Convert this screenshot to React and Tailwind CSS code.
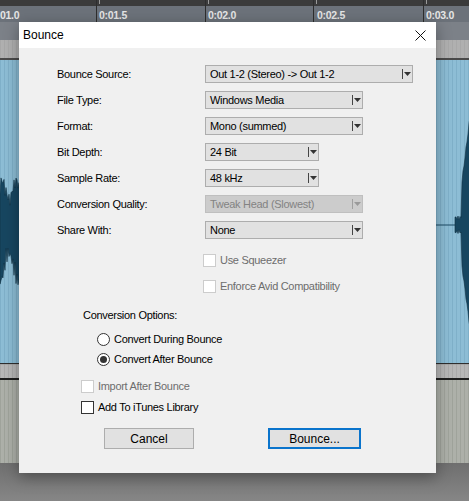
import React from "react";

const FONT = { fontFamily: '"Liberation Sans", Arial, sans-serif' };

function buildLeftWave() {
  const top = [];
  const bottom = [];
  for (let x = 0; x <= 20; x++) {
    const t = 225 - (26 + 14 * Math.abs(Math.sin(x * 1.9)) + 9 * Math.sin(x * 0.45 + 0.6));
    const b = 225 + (30 + 18 * Math.abs(Math.sin(x * 1.4 + 1)) + 14 * Math.cos(x * 0.35));
    top.push(`${x},${t.toFixed(1)}`);
    bottom.unshift(`${x},${b.toFixed(1)}`);
  }
  return [...top, ...bottom].join(" ");
}

function buildRightWave() {
  const top = [];
  const bottom = [];
  for (let x = 455; x <= 470; x++) {
    let a;
    if (x < 462) a = 4 + 5 * Math.abs(Math.sin(x * 1.3));
    else a = 40 + (x - 462) * 8 + 6 * Math.abs(Math.sin(x * 2.1));
    const t = 225 - a;
    const b = 225 + a * 0.95;
    top.push(`${x},${t.toFixed(1)}`);
    bottom.unshift(`${x},${b.toFixed(1)}`);
  }
  return [...top, ...bottom].join(" ");
}

function Backdrop() {
  const ticks = [96, 205, 313, 423];
  const labels = [
    { x: 0, t: "01.0" },
    { x: 99, t: "0:01.5" },
    { x: 208, t: "0:02.0" },
    { x: 317, t: "0:02.5" },
    { x: 426, t: "0:03.0" },
  ];
  return (
    <svg className="absolute inset-0" width="469" height="501" viewBox="0 0 469 501">
      <defs>
        <pattern id="blueStripe" width="4" height="10" patternUnits="userSpaceOnUse">
          <rect width="4" height="10" fill="#8dbdd5" />
          <rect width="1" height="10" fill="#7fb0c9" />
        </pattern>
        <pattern id="grayStripe" width="4" height="10" patternUnits="userSpaceOnUse">
          <rect width="4" height="10" fill="#adb0a9" />
          <rect width="1" height="10" fill="#9fa39b" />
        </pattern>
        <pattern id="lightStripe" width="4" height="10" patternUnits="userSpaceOnUse">
          <rect width="4" height="10" fill="#b7b7b7" />
          <rect width="1" height="10" fill="#a9a9a9" />
        </pattern>
        <linearGradient id="floor" x1="0" y1="0" x2="0" y2="1">
          <stop offset="0" stopColor="#6f6f6f" />
          <stop offset="1" stopColor="#868686" />
        </linearGradient>
      </defs>
      <rect x="0" y="0" width="469" height="6" fill="#3b3b3b" />
      <rect x="0" y="6" width="469" height="16" fill="#6c727a" />
      <rect x="0" y="22" width="469" height="18" fill="#7c8188" />
      <rect x="0" y="40" width="469" height="18" fill="#a6a6a6" />
      <rect x="0" y="40" width="469" height="18" fill="url(#lightStripe)" opacity="0.6" />
      <rect x="0" y="58" width="469" height="2" fill="#4a4a4a" />
      <rect x="0" y="60" width="469" height="303" fill="url(#blueStripe)" />
      <rect x="0" y="363" width="469" height="1.5" fill="#2f2f2f" />
      <rect x="0" y="364.5" width="469" height="14" fill="url(#lightStripe)" />
      <rect x="0" y="378" width="469" height="2" fill="#1e1e1e" />
      <rect x="0" y="380" width="469" height="83" fill="url(#grayStripe)" />
      <rect x="0" y="463" width="469" height="38" fill="url(#floor)" />
      {ticks.map((x) => (
        <g key={x}>
          <rect x={x} y="0" width="1" height="22" fill="#2e2e2e" />
          <rect x={x + 3} y="0" width="1" height="4" fill="#9a9a9a" />
        </g>
      ))}
      {labels.map((l) => (
        <text
          key={l.x}
          x={l.x}
          y="19"
          fill="#e6e6e6"
          fontSize="10.5"
          fontWeight="bold"
          fontFamily='"Liberation Sans", Arial, sans-serif'
        >
          {l.t}
        </text>
      ))}
      <line x1="0" y1="225" x2="469" y2="225" stroke="#1c4a64" strokeWidth="1" />
      <polygon points={buildLeftWave()} fill="#174660" stroke="#0f2f42" strokeWidth="0.6" />
      <polygon points={buildRightWave()} fill="#174660" stroke="#0f2f42" strokeWidth="0.6" />
    </svg>
  );
}

function Select({ value, widthClass, disabled }) {
  return (
    <div
      className={`flex h-[18px] items-center border ${widthClass} ${
        disabled ? "border-[#bfbfbf] bg-[#cccccc] text-[#838383]" : "border-[#adadad] bg-[#e1e1e1] text-black"
      }`}
    >
      <span className="flex-1 truncate pl-[4px] leading-none">{value}</span>
      <div className={`h-[10px] w-px ${disabled ? "bg-[#a0a0a0]" : "bg-[#444]"}`} />
      <div className="flex w-[9px] items-center justify-center">
        <svg width="7" height="4" viewBox="0 0 7 4">
          <polygon points="0,0 7,0 3.5,4" fill={disabled ? "#9a9a9a" : "#333"} />
        </svg>
      </div>
    </div>
  );
}

function Row({ label, children }) {
  return (
    <div className="mb-[8px] flex h-[18px] items-center">
      <div className="w-[186px] pl-[38px] text-black">{label}</div>
      {children}
    </div>
  );
}

function Check({ label, disabled }) {
  return (
    <div className={`flex h-[13px] items-center gap-[4px] leading-[13px] ${disabled ? "text-[#6d6d6d]" : "text-black"}`}>
      <div className={`h-[13px] w-[13px] border bg-white ${disabled ? "border-[#cccccc]" : "border-[#333]"}`} />
      <span>{label}</span>
    </div>
  );
}

function Radio({ label, checked }) {
  return (
    <div className="flex h-[13px] items-center gap-[4px] leading-[13px] text-black">
      <div className="flex h-[13px] w-[13px] items-center justify-center rounded-full border border-[#333] bg-white">
        {checked && <div className="h-[7px] w-[7px] rounded-full bg-[#333]" />}
      </div>
      <span>{label}</span>
    </div>
  );
}

export default function App() {
  return (
    <div className="relative h-[501px] w-[469px] overflow-hidden text-[11px] tracking-[-0.3px]" style={FONT}>
      <Backdrop />
      <div className="absolute left-[19px] top-[22px] w-[417px] shadow-[0_4px_14px_rgba(0,0,0,0.35)]">
        <div className="flex h-[26px] items-center justify-between bg-white pl-[4px] pr-[10px]">
          <span className="text-[12px] tracking-normal text-black">Bounce</span>
          <svg width="11" height="11" viewBox="0 0 11 11">
            <path d="M0.5 0.5 L10.5 10.5 M10.5 0.5 L0.5 10.5" stroke="#111" strokeWidth="1" />
          </svg>
        </div>
        <div className="flex h-[425px] flex-col bg-[#f0f0f0] pt-[17px]">
          <Row label="Bounce Source:">
            <Select value="Out 1-2 (Stereo) -> Out 1-2" widthClass="w-[208px]" />
          </Row>
          <Row label="File Type:">
            <Select value="Windows Media" widthClass="w-[158px]" />
          </Row>
          <Row label="Format:">
            <Select value="Mono (summed)" widthClass="w-[158px]" />
          </Row>
          <Row label="Bit Depth:">
            <Select value="24 Bit" widthClass="w-[114px]" />
          </Row>
          <Row label="Sample Rate:">
            <Select value="48 kHz" widthClass="w-[114px]" />
          </Row>
          <Row label="Conversion Quality:">
            <Select value="Tweak Head (Slowest)" widthClass="w-[158px]" disabled />
          </Row>
          <Row label="Share With:">
            <Select value="None" widthClass="w-[158px]" />
          </Row>

          <div className="mt-[7px] flex flex-col gap-[13px] pl-[184px]">
            <Check label="Use Squeezer" disabled />
            <Check label="Enforce Avid Compatibility" disabled />
          </div>

          <div className="mt-[16px] h-[13px] pl-[64px] leading-[13px] text-black">Conversion Options:</div>
          <div className="mt-[11px] flex flex-col gap-[7px] pl-[78px]">
            <Radio label="Convert During Bounce" />
            <Radio label="Convert After Bounce" checked />
          </div>

          <div className="mt-[14px] flex flex-col gap-[8px] pl-[62px]">
            <Check label="Import After Bounce" disabled />
            <Check label="Add To iTunes Library" />
          </div>

          <div className="mt-[14px] flex pl-[85px]">
            <button className="h-[21px] w-[90px] border border-[#adadad] bg-[#e1e1e1] text-[12px] tracking-normal text-black">
              Cancel
            </button>
            <button className="ml-[74px] h-[21px] w-[93px] border-2 border-[#0a74cc] bg-[#e1e1e1] text-[12px] tracking-normal text-black">
              Bounce...
            </button>
          </div>
        </div>
      </div>
    </div>
  );
}
